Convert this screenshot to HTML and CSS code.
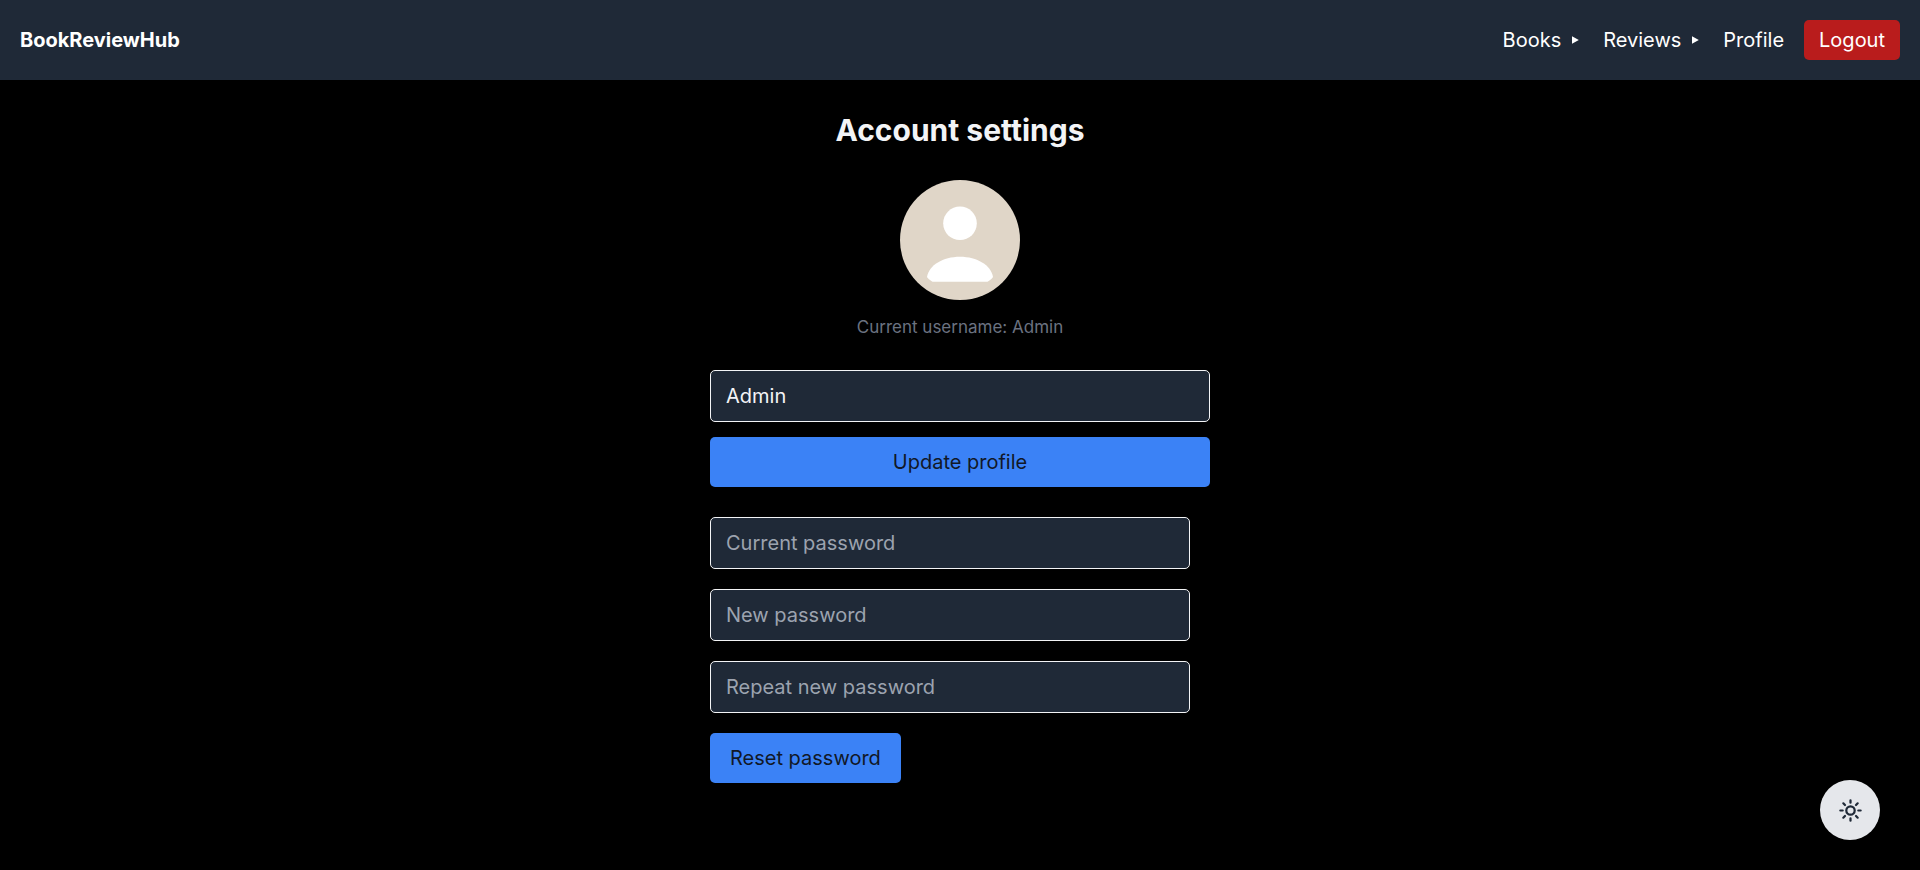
FILE: index.html
```html
<!DOCTYPE html>
<html lang="en">
<head>
<meta charset="utf-8">
<meta name="viewport" content="width=device-width, initial-scale=1">
<title>BookReviewHub</title>
<link rel="stylesheet" href="styles.css">
</head>
<body>
<header class="navbar">
  <a class="brand" href="#">BookReviewHub</a>
  <nav class="nav">
    <button class="nav-item nav-toggle" type="button">Books
      <svg class="caret" viewBox="0 0 8 8" aria-hidden="true"><path d="M1 0.3L7.800 4L1 7.700z"/></svg>
    </button>
    <button class="nav-item nav-toggle" type="button">Reviews
      <svg class="caret" viewBox="0 0 8 8" aria-hidden="true"><path d="M1 0.3L7.800 4L1 7.700z"/></svg>
    </button>
    <a class="nav-item" href="#">Profile</a>
    <button class="logout" type="button">Logout</button>
  </nav>
</header>
<main class="settings">
  <h1 class="title">Account settings</h1>
  <svg class="avatar" viewBox="0 0 120 120" role="img" aria-label="Profile picture">
    <circle cx="60" cy="60" r="60" fill="#e0d6c8"/>
    <circle cx="60" cy="43.3" r="16.8" fill="#fff"/>
    <path d="M27 97C29 85 43 76.700 60 76.700S91 85 93 97Q92.500 98.500 87.500 101.700H32.500Q27.500 98.500 27 97z" fill="#fff"/>
  </svg>
  <p class="username">Current username: Admin</p>
  <form class="profile-form">
    <input class="field" type="text" value="Admin" aria-label="Username">
    <button class="btn" type="submit">Update profile</button>
  </form>
  <form class="password-form">
    <input class="field" type="password" placeholder="Current password" aria-label="Current password">
    <input class="field" type="password" placeholder="New password" aria-label="New password">
    <input class="field" type="password" placeholder="Repeat new password" aria-label="Repeat new password">
    <button class="btn btn-fit" type="submit">Reset password</button>
  </form>
</main>
<button class="theme" type="button" aria-label="Switch to light theme">
  <svg class="theme-icon" viewBox="0 0 512 512" aria-hidden="true">
    <path d="M256 48v48M256 416v48M403.080 108.920l-33.940 33.940M142.860 369.140l-33.940 33.940M464 256h-48M96 256H48M403.080 403.080l-33.940-33.940M142.860 142.860l-33.940-33.940"/>
    <circle cx="256" cy="256" r="86"/>
  </svg>
</button>
</body>
</html>
```
FILE: styles.css
```css
* {
  box-sizing: border-box;
}

body {
  margin: 0;
  background: #000;
  color: #f3f4f6;
  font-family: Inter, "Liberation Sans", sans-serif;
  font-size: 20px;
  line-height: 30px;
}

button,
input {
  font: inherit;
}

button {
  border: 0;
  cursor: pointer;
}

.navbar {
  display: flex;
  align-items: center;
  justify-content: space-between;
  padding: 20px;
  background: #1f2937;
  color: #fff;
}

.brand {
  color: inherit;
  font-weight: 700;
  text-decoration: none;
}

.nav {
  display: flex;
  align-items: center;
  gap: 20px;
}

.nav-item {
  padding: 0;
  background: none;
  color: inherit;
  text-decoration: none;
}

.nav-toggle {
  display: flex;
  align-items: center;
  gap: 10px;
  padding-right: 4px;
}

.caret {
  width: 8px;
  height: 8px;
  fill: currentColor;
}

.logout {
  padding: 5px 15px;
  border-radius: 5px;
  background: #b91c1c;
  color: #fff;
}

.settings {
  display: flex;
  flex-direction: column;
  align-items: center;
  width: 100%;
  max-width: 560px;
  margin: 0 auto;
  padding: 30px;
}

.title {
  margin: 0 0 30px;
  font-size: 30px;
  font-weight: 700;
  line-height: 40px;
}

.avatar {
  width: 120px;
  height: 120px;
}

.username {
  margin: 15px 0 30px;
  color: #6b7280;
  font-size: 17px;
  line-height: 25px;
}

.profile-form,
.password-form {
  display: flex;
  flex-direction: column;
  width: 100%;
}

.profile-form {
  gap: 15px;
  margin-bottom: 30px;
}

.password-form {
  gap: 20px;
  padding-right: 20px;
}

.field {
  width: 100%;
  height: 52px;
  padding: 10px 15px;
  border: 1px solid #f3f4f6;
  border-radius: 5px;
  background: #1f2937;
  color: #f3f4f6;
}

.field::placeholder {
  color: #9ca3af;
  opacity: 1;
}

.btn {
  padding: 10px 20px;
  border-radius: 5px;
  background: #3b82f6;
  color: #111827;
}

.btn-fit {
  align-self: flex-start;
}

.theme {
  position: fixed;
  right: 40px;
  bottom: 30px;
  display: grid;
  place-items: center;
  width: 60px;
  height: 60px;
  padding: 0;
  border-radius: 50%;
  background: #e5e7eb;
}

.theme-icon {
  width: 25px;
  height: 25px;
  fill: none;
  stroke: #1f2937;
  stroke-width: 46;
  stroke-linecap: round;
}
```
